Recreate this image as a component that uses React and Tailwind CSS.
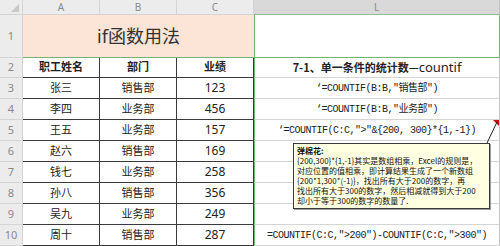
import React from 'react';

const rows = [
    { n: 3, name: '张三', dept: '销售部', score: 123, formula: "‘=COUNTIF(B:B,\"销售部\")" },
    { n: 4, name: '李四', dept: '业务部', score: 456, formula: "‘=COUNTIF(B:B,\"业务部\")" },
    { n: 5, name: '王五', dept: '业务部', score: 157, formula: "‘=COUNTIF(C:C,\">\"&{200, 300}*{1,-1})", note: true },
    { n: 6, name: '赵六', dept: '销售部', score: 169 },
    { n: 7, name: '钱七', dept: '业务部', score: 258 },
    { n: 8, name: '孙八', dept: '销售部', score: 356 },
    { n: 9, name: '吴九', dept: '业务部', score: 249 },
    { n: 10, name: '周十', dept: '销售部', score: 287, formula: "=COUNTIF(C:C,\">200\")-COUNTIF(C:C,\">300\")" },
];

const commentLines = [
    '{200,300}*{1,-1}其实是数组相乘，Excel的规则是，',
    '对应位置的值相乘，即计算结果生成了一个新数组',
    '{200*1,300*(-1)}，找出所有大于200的数字，再',
    '找出所有大于300的数字，然后相减就得到大于200',
    '却小于等于300的数字的数量了.',
];

const rowNum = 'flex items-center justify-center bg-[#ececec] text-[11px] text-[#8a8a8a] border-b border-r border-[#d4d4d4]';
const dataCell = 'flex items-center justify-center border-b border-r border-[#3a3a3a] text-[11px] text-[#222]';
const formulaCell = 'flex items-center justify-center border-b border-r border-[#d4d4d4] whitespace-nowrap text-[10px] tracking-[-0.5px] text-[#222] font-["Liberation_Mono","Noto_Sans_CJK_SC",monospace]';

function App() {
    return (
        <div className='relative w-[500px] h-[246px] overflow-hidden bg-white font-["Noto_Sans","Noto_Sans_CJK_SC",sans-serif]'>
            <div className="grid grid-cols-[23px_77px_77px_77px_246px] grid-rows-[15px_43px_20px_repeat(8,21px)]">
                {/* column headers */}
                <div className="relative bg-[#ececec] border-b border-r border-[#d4d4d4]">
                    <div className="absolute right-[3px] bottom-[2px] w-0 h-0 border-l-[8px] border-l-transparent border-b-[8px] border-b-[#c8c8c8]" />
                </div>
                {['A', 'B', 'C'].map((c) => (
                    <div key={c} className="flex items-center justify-center bg-[#ececec] border-b border-r border-[#d4d4d4] text-[10px] leading-none text-[#8a8a8a]">
                        {c}
                    </div>
                ))}
                <div className="flex items-center justify-center bg-[#d9d9d9] border-b border-r border-b-[#8fbf8f] border-r-[#c4c4c4] text-[10px] leading-none text-[#8a8a8a]">
                    L
                </div>

                {/* row 1 */}
                <div className={rowNum}>1</div>
                <div className="col-span-3 flex items-center justify-center bg-[#fce4d6] border-b border-[#76b276] text-[18px] text-[#333]">
                    if函数用法
                </div>
                <div className="border-b border-l border-r border-[#76b276]" />

                {/* row 2 */}
                <div className={rowNum}>2</div>
                <div className={dataCell + ' font-bold'}>职工姓名</div>
                <div className={dataCell + ' font-bold'}>部门</div>
                <div className={dataCell + ' font-bold'}>业绩</div>
                <div className="flex items-center justify-center border-b border-[#d4d4d4] border-l border-l-[#76b276] border-r border-r-[#c4c4c4] whitespace-nowrap text-[#222]">
                    <span className="text-[11px] font-bold font-['Noto_Sans_CJK_SC',sans-serif]">7-1、单一条件的统计数—</span>
                    <span className="text-[13px]">countif</span>
                </div>

                {rows.map((r) => (
                    <React.Fragment key={r.n}>
                        <div className={rowNum}>{r.n}</div>
                        <div className={dataCell}>{r.name}</div>
                        <div className={dataCell}>{r.dept}</div>
                        <div className={dataCell + ' text-[12px]'}>{r.score}</div>
                        <div className={formulaCell + ' relative border-l border-l-[#76b276] border-r-[#c4c4c4]'}>
                            {r.formula}
                            {r.note && (
                                <div className="absolute right-0 top-0 w-0 h-0 border-l-[6px] border-l-transparent border-t-[6px] border-t-[#d40000]" />
                            )}
                        </div>
                    </React.Fragment>
                ))}
            </div>

            {/* comment pointer */}
            <svg className="absolute left-0 top-0" width="500" height="246">
                <line x1="497" y1="122" x2="487" y2="143" stroke="#222" strokeWidth="1" />
            </svg>

            {/* comment box */}
            <div className="absolute left-[293px] top-[143px] w-[197px] h-[66px] bg-[#ffffe1] border border-[#3a3a3a] shadow-[1px_1px_0_#9a9a9a] pl-[3px] pt-[2px] overflow-hidden font-['Noto_Sans_CJK_SC',sans-serif] text-[8px] leading-[10px] text-[#111] whitespace-nowrap">
                <div className="font-bold">弹棉花:</div>
                {commentLines.map((line, i) => (
                    <div key={i}>{line}</div>
                ))}
            </div>
        </div>
    );
}

export default App;
